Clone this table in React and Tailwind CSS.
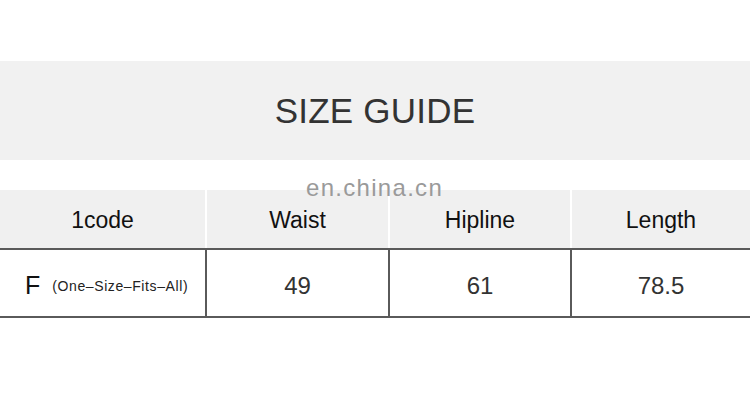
export default function App() {
  const headers = ['1code', 'Waist', 'Hipline', 'Length'];
  const values = ['49', '61', '78.5'];
  const cols = 'grid grid-cols-[205px_2px_181px_2px_180px_2px_178px]';

  return (
    <div className="w-[750px] h-[400px] bg-white overflow-hidden font-['Liberation_Sans',Arial,sans-serif]">
      <div className="h-[61px]" />
      <div className="h-[99px] bg-[#f1f1f1] flex items-center justify-center pt-[2px]">
        <h1 className="text-[35px] text-[#333] tracking-[0.2px]">SIZE GUIDE</h1>
      </div>
      <div className="relative mt-[30px]">
        <span className="absolute left-[306px] top-[-14px] text-[24px] leading-none tracking-[1.3px] text-[#9a9a9a] z-10">
          en.china.cn
        </span>
        {/* header row */}
        <div className={`${cols} h-[58px]`}>
          {headers.map((h, i) => (
            <>
              <div key={h} className="bg-[#f0f0f0] flex items-center justify-center pt-[3px] text-[23px] text-[#111]">
                {h}
              </div>
              {i < 3 && <div className="bg-white" />}
            </>
          ))}
        </div>
        <div className="h-[2px] bg-[#5a5a5a]" />
        {/* data row */}
        <div className={`${cols} h-[66px]`}>
          <div className="flex items-center pl-[25px] pt-[6px]">
            <span className="text-[25px] text-[#111]">F</span>
            <span className="ml-[12px] text-[14px] tracking-[0.6px] text-[#222]">(One–Size–Fits–All)</span>
          </div>
          {values.map((v) => (
            <>
              <div key={v + 'l'} className="bg-[#5a5a5a]" />
              <div key={v} className="flex items-center justify-center pt-[6px] text-[24px] text-[#333]">
                {v}
              </div>
            </>
          ))}
        </div>
        <div className="h-[2px] bg-[#5a5a5a]" />
      </div>
    </div>
  );
}
